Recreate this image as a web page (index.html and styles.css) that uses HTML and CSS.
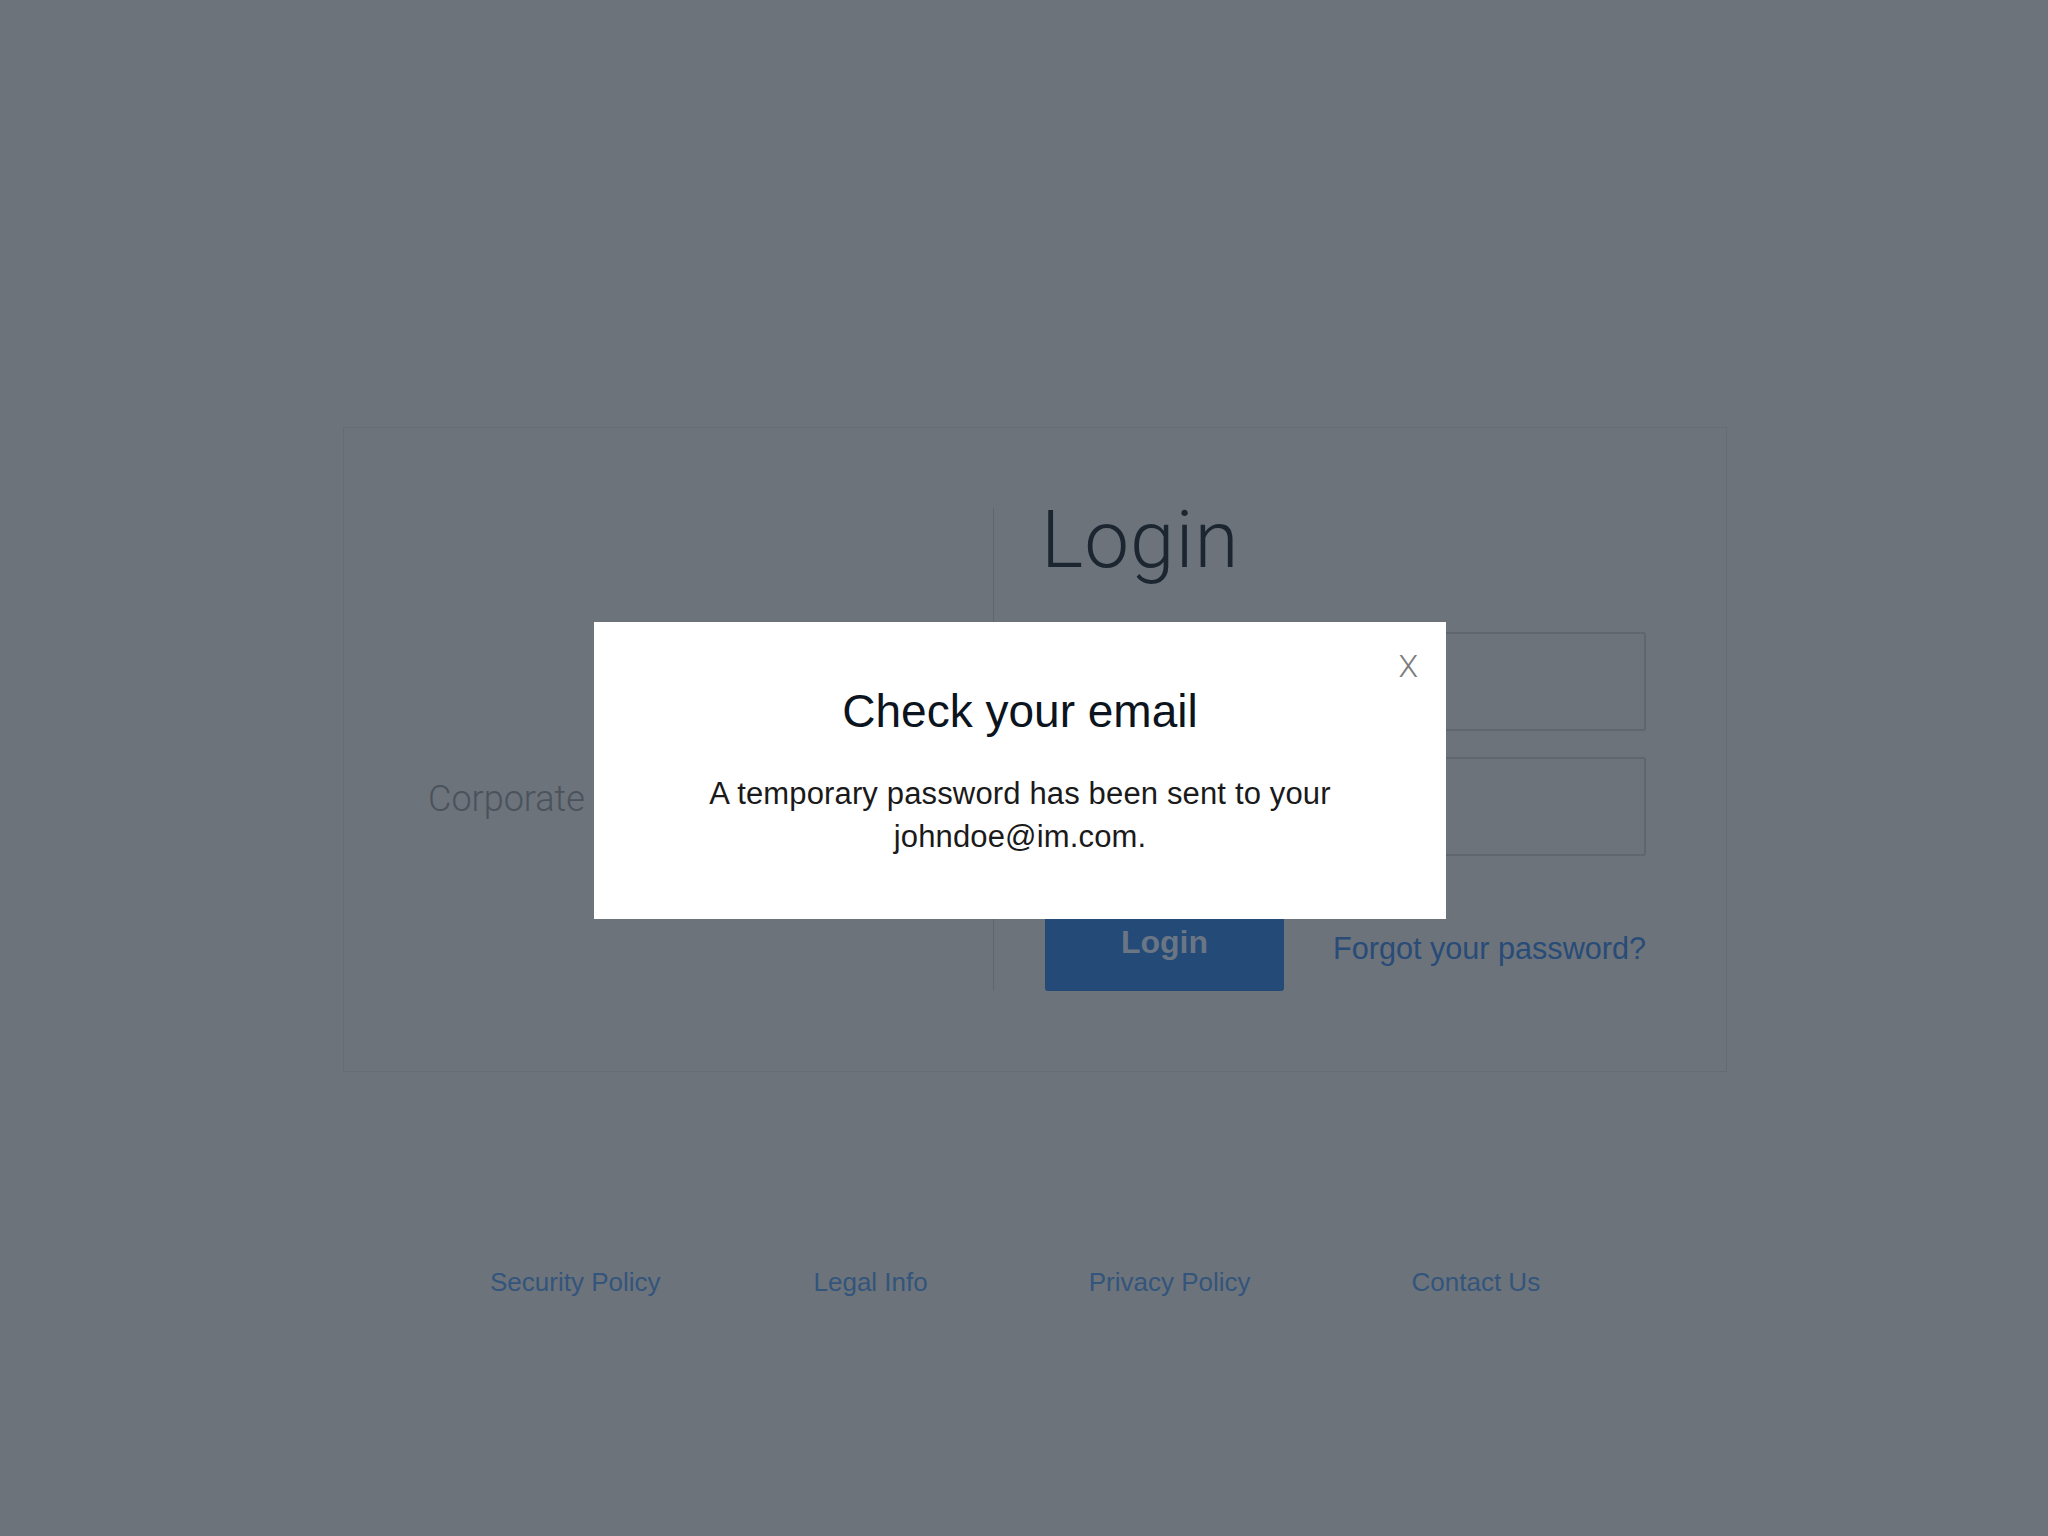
FILE: index.html
```html
<!DOCTYPE html>
<html lang="en">
<head>
<meta charset="utf-8">
<title>Login</title>
<link rel="stylesheet" href="styles.css">
</head>
<body>
<main class="page">
  <section class="card">
    <div class="brand">
      <div class="brand-name">Corporate</div>
    </div>
    <div class="login">
      <h1 class="login-title">Login</h1>
      <input class="field" type="text" aria-label="User ID">
      <input class="field field-second" type="password" aria-label="Password">
      <div class="actions">
        <button class="login-btn" type="button">Login</button>
        <a class="forgot" href="#">Forgot your password?</a>
      </div>
    </div>
  </section>
  <footer class="footer">
    <a class="footer-link" href="#">Security Policy</a>
    <a class="footer-link footer-link-tight" href="#">Legal Info</a>
    <a class="footer-link" href="#">Privacy Policy</a>
    <a class="footer-link" href="#">Contact Us</a>
  </footer>
</main>
<div class="modal" role="dialog">
  <span class="modal-close">X</span>
  <h2 class="modal-title">Check your email</h2>
  <p class="modal-text">A temporary password has been sent to your johndoe@im.com.</p>
</div>
</body>
</html>
```
FILE: styles.css
```css
html, body {
  margin: 0;
  padding: 0;
}
body {
  background: #6c737b;
  width: 2048px;
  height: 1536px;
  position: relative;
  overflow: hidden;
  font-family: "Liberation Sans", Arial, sans-serif;
}
.page {
  padding-top: 427px;
}
.card {
  display: flex;
  margin-left: 343px;
  width: 1384px;
  box-sizing: border-box;
  border: 1px solid #656c74;
  padding: 80px 80px 80px 0;
}
.brand {
  flex: 0 0 649px;
  box-sizing: border-box;
  padding: 271px 0 0 84px;
}
.brand-name {
  font-family: Roboto, "Liberation Sans", sans-serif;
  font-weight: 300;
  font-size: 36px;
  line-height: 40px;
  color: #4a525b;
  white-space: nowrap;
}
.login {
  flex: 1;
  display: flex;
  flex-direction: column;
  border-left: 1px solid #5f666e;
  padding-left: 51px;
}
.login-title {
  margin: -8px 0 0 -4px;
  font-family: Roboto, "Liberation Sans", sans-serif;
  font-weight: 300;
  font-size: 80px;
  line-height: 80px;
  letter-spacing: 1px;
  color: #1c2631;
}
.field {
  display: block;
  margin: 52px 0 0 0;
  height: 99px;
  box-sizing: border-box;
  border: 2px solid #5f666e;
  border-radius: 3px;
  background: transparent;
  padding: 0;
}
.field-second {
  margin-top: 26px;
}
.actions {
  display: flex;
  align-items: center;
  justify-content: space-between;
  margin-top: 37px;
}
.login-btn {
  width: 239px;
  height: 98px;
  border: 0;
  border-radius: 3px;
  background: #244a78;
  color: #6b7685;
  font-family: "Liberation Sans", Arial, sans-serif;
  font-weight: 700;
  font-size: 32px;
  padding: 1px 0 0 0;
}
.forgot {
  margin-top: 12px;
  font-size: 30.6px;
  color: #284b77;
  text-decoration: none;
}
.footer {
  display: flex;
  gap: 161px;
  margin: 195px 0 0 490px;
  font-size: 26px;
  line-height: 30px;
}
.footer-link {
  color: #33557b;
  text-decoration: none;
}
.footer-link-tight {
  margin-left: -8px;
}
.modal {
  position: absolute;
  left: 594px;
  top: 622px;
  width: 852px;
  height: 297px;
  box-sizing: border-box;
  background: #ffffff;
  padding-top: 62px;
  text-align: center;
}
.modal-close {
  position: absolute;
  top: 28px;
  right: 28px;
  font-family: Roboto, "Liberation Sans", sans-serif;
  font-weight: 300;
  font-size: 32px;
  line-height: 32px;
  color: #7d7d7d;
}
.modal-title {
  margin: 0;
  font-weight: 400;
  font-size: 46px;
  line-height: 55px;
  color: #0c1420;
}
.modal-text {
  margin: 33px auto 0;
  width: 660px;
  font-size: 31px;
  line-height: 43px;
  letter-spacing: 0.15px;
  color: #1a1a1a;
}
```
